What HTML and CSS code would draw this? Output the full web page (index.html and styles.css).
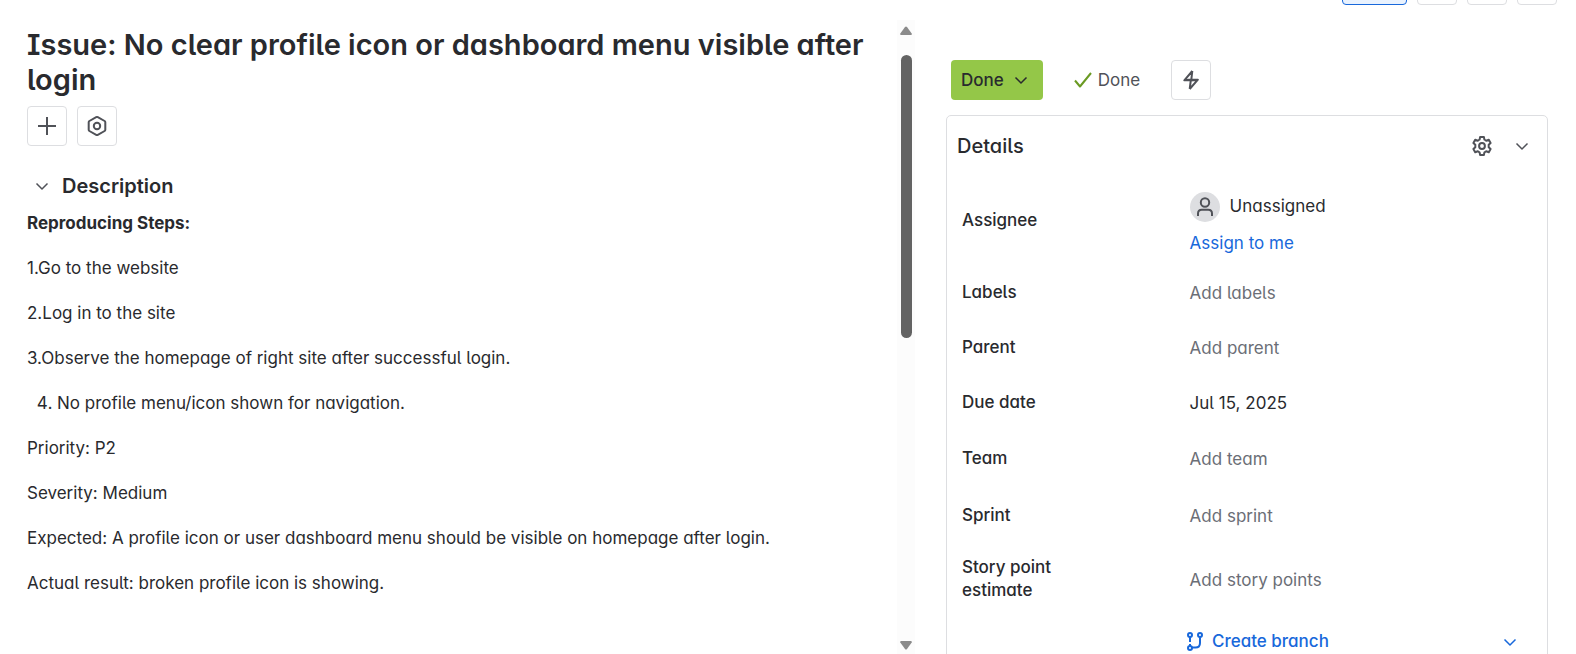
FILE: index.html
```html
<!DOCTYPE html>
<html lang="en">
<head>
<meta charset="utf-8">
<title>Issue: No clear profile icon or dashboard menu visible after login</title>
<link rel="stylesheet" href="styles.css">
</head>
<body>
<div class="issue">
  <main class="content">
    <h1 class="title">Issue: No clear profile icon or dashboard menu visible after login</h1>
    <div class="actions">
      <button class="icon-button" type="button" aria-label="Add">
        <svg width="20" height="20" viewBox="0 0 20 20"><path d="M10 1v18M1 10h18"/></svg>
      </button>
      <button class="icon-button" type="button" aria-label="Apps">
        <svg width="20" height="20" viewBox="0 0 20 20"><path d="M9.2 1.2Q10 .8 10.800 1.200L17.600 5Q18.300 5.400 18.300 6.200V13.800Q18.300 14.600 17.600 15L10.800 18.800Q10 19.200 9.200 18.800L2.400 15Q1.700 14.600 1.700 13.800V6.200Q1.700 5.400 2.400 5Z"/><circle cx="10" cy="10" r="3.200"/></svg>
      </button>
    </div>
    <section>
      <div class="section-head">
        <button class="bare-button" type="button" aria-label="Collapse description">
          <svg width="14" height="14" viewBox="0 0 14 14"><path class="thin" d="M1.500 4.500L7 10l5.500-5.500"/></svg>
        </button>
        <h2 class="section-title">Description</h2>
      </div>
      <div class="description">
        <p><strong>Reproducing Steps:</strong></p>
        <p>1.Go to the website</p>
        <p>2.Log in to the site</p>
        <p>3.Observe the homepage of right site after successful login.</p>
        <ol start="4"><li>No profile menu/icon shown for navigation.</li></ol>
        <p>Priority: P2</p>
        <p>Severity: Medium</p>
        <p>Expected: A profile icon or user dashboard menu should be visible on homepage after login.</p>
        <p>Actual result: broken profile icon is showing.</p>
      </div>
    </section>
  </main>

  <div class="scrollbar" aria-hidden="true">
    <svg class="arrow" width="14" height="10" viewBox="0 0 14 10"><path d="M6 1Q7 0 8 1l4.700 6.500Q13.200 9 12 9H2Q.8 9 1.300 7.500Z"/></svg>
    <div class="track"><div class="thumb"></div></div>
    <svg class="arrow" width="14" height="10" viewBox="0 0 14 10"><path d="M6 9Q7 10 8 9l4.700-6.500Q13.200 1 12 1H2Q.8 1 1.300 2.500Z"/></svg>
  </div>

  <aside class="sidebar">
    <div class="toolbar">
      <button class="icon-button watch" type="button" aria-label="Watch"></button>
      <button class="icon-button" type="button" aria-label="Share"></button>
      <button class="icon-button" type="button" aria-label="More actions"></button>
      <button class="icon-button" type="button" aria-label="Full screen"></button>
    </div>
    <div class="status">
      <button class="status-button" type="button">Done
        <svg width="14" height="14" viewBox="0 0 14 14"><path class="thin" d="M1.500 4.500L7 10l5.500-5.500"/></svg>
      </button>
      <span class="resolution">
        <svg width="18" height="18" viewBox="0 0 18 18"><path d="M1 9.500L6 15.500 17 2"/></svg>
        Done
      </span>
      <button class="icon-button" type="button" aria-label="Automation">
        <svg width="20" height="20" viewBox="0 0 20 20"><path d="M11.300 1L3.300 10.300L10.300 9.500M8.700 19L16.900 9.700L9.900 10.500M11.300 1L10.300 9.700H16.900M8.700 19L9.800 10.300H3.300"/></svg>
      </button>
    </div>
    <section class="details">
      <header class="details-head">
        <h2 class="details-title">Details</h2>
        <button class="bare-button" type="button" aria-label="Configure fields">
          <svg width="20" height="20" viewBox="0 0 20 20"><path d="M8.100 1H11.900L12.400 3.600Q13.200 3.900 14.200 4.700L16.800 3.800 18.600 7 16.700 8.800V11.200L18.600 13 16.800 16.200 14.200 15.300Q13.200 16.100 12.400 16.400L11.900 19H8.100L7.600 16.400Q6.800 16.100 5.800 15.300L3.200 16.200 1.400 13 3.300 11.200V8.800L1.400 7 3.200 3.800 5.800 4.700Q6.800 3.900 7.600 3.600Z"/><circle cx="10" cy="10" r="2.900"/></svg>
        </button>
        <button class="bare-button" type="button" aria-label="Collapse details">
          <svg width="14" height="14" viewBox="0 0 14 14"><path class="thin" d="M1.500 4.500L7 10l5.500-5.500"/></svg>
        </button>
      </header>
      <dl class="fields">
        <div class="field assignee">
          <dt>Assignee</dt>
          <dd>
            <span class="person">
              <span class="avatar"><svg width="20" height="20" viewBox="0 0 20 20"><circle cx="10" cy="5.500" r="4.200"/><path d="M3 19V16.500Q3 12.700 6.800 12.700H13.200Q17 12.700 17 16.500V19"/></svg></span>
              Unassigned
            </span>
            <a class="link" href="#">Assign to me</a>
          </dd>
        </div>
        <div class="field"><dt>Labels</dt><dd class="empty">Add labels</dd></div>
        <div class="field"><dt>Parent</dt><dd class="empty">Add parent</dd></div>
        <div class="field"><dt>Due date</dt><dd>Jul 15, 2025</dd></div>
        <div class="field roomy"><dt>Team</dt><dd class="empty">Add team</dd></div>
        <div class="field roomy"><dt>Sprint</dt><dd class="empty">Add sprint</dd></div>
        <div class="field two-line"><dt>Story point estimate</dt><dd class="empty">Add story points</dd></div>
      </dl>
      <div class="development">
        <a class="link branch" href="#">
          <svg width="16" height="20" viewBox="0 0 16 20"><circle cx="3" cy="3" r="2"/><circle cx="13" cy="3" r="2"/><circle cx="3" cy="16" r="2"/><path d="M3 5v5M3 12v2M13 5v6Q13 15.500 8.500 15.500H5"/></svg>
          Create branch
        </a>
        <button class="bare-button blue" type="button" aria-label="Branch options">
          <svg width="14" height="14" viewBox="0 0 14 14"><path class="thin" d="M1.500 4.500L7 10l5.500-5.500"/></svg>
        </button>
      </div>
    </section>
  </aside>
</div>
</body>
</html>
```
FILE: styles.css
```css
* { box-sizing: border-box; }

body {
  margin: 0;
  background: #fff;
  color: #292a2e;
  font-family: Inter, "Liberation Sans", sans-serif;
  font-feature-settings: "cv05", "cv08", "cv11";
  font-size: 17px;
  line-height: 23px;
}

h1, h2, p, ol, dl, dd { margin: 0; }
button { font: inherit; font-feature-settings: inherit; color: inherit; cursor: pointer; }
svg { display: block; flex: none; fill: none; stroke: currentColor; stroke-width: 2; stroke-linejoin: round; }
svg .thin { stroke-width: 1.5; }

.issue {
  display: grid;
  grid-template-columns: 897fr 18px 661fr;
  height: 100vh;
  overflow: hidden;
}

.content { padding: 27px 27px 0; overflow: hidden; }
.title { font-size: 29px; line-height: 35px; font-weight: 600; }
.actions { display: flex; gap: 10px; margin-top: 9px; }

.icon-button {
  display: flex;
  align-items: center;
  justify-content: center;
  width: 40px;
  height: 40px;
  padding: 0;
  border: 1px solid #dddee1;
  border-radius: 4px;
  background: #fff;
  color: #505258;
}

.bare-button {
  display: flex;
  align-items: center;
  justify-content: center;
  width: 30px;
  height: 30px;
  padding: 0;
  border: 0;
  background: none;
  color: #505258;
}

.section-head { display: flex; align-items: center; gap: 5px; margin-top: 25px; }
.section-title { font-size: 20px; line-height: 25px; font-weight: 600; }
.description { display: grid; gap: 15px; margin-top: 7px; line-height: 30px; }
.description strong { font-weight: 700; }
.description ol { padding-left: 30px; }

.scrollbar {
  display: flex;
  flex-direction: column;
  align-items: center;
  gap: 19px;
  margin-top: 20px;
  padding: 6px 0 4px;
  background: #fcfcfc;
}
.arrow { fill: #8b8b8b; stroke: none; }
.track { flex: 1; width: 11px; }
.thumb { height: 50%; border-radius: 6px; background: #636363; }

.sidebar { display: flex; flex-direction: column; padding: 0 28px 0 31px; overflow: hidden; }
.toolbar {
  display: flex;
  flex: none;
  align-items: flex-end;
  justify-content: flex-end;
  gap: 10px;
  height: 5px;
  margin-right: -9px;
}
.watch { width: 65px; border-color: #1868db; background: #e9f2fe; }

.status { display: flex; flex: none; align-items: center; margin-top: 55px; padding-left: 5px; }
.status-button {
  display: flex;
  align-items: center;
  gap: 10px;
  height: 40px;
  padding: 0 15px 0 10px;
  border: 0;
  border-radius: 4px;
  background: #94c748;
  font-weight: 500;
}
.resolution { display: flex; align-items: center; gap: 6px; margin: 0 31px; color: #505258; }
.resolution svg { color: #6a9a23; }

.details {
  flex: 1;
  min-height: 540px;
  margin-top: 15px;
  border: 1px solid #dddee1;
  border-radius: 5px 5px 0 0;
}
.details-head { display: flex; align-items: center; gap: 10px; height: 60px; padding: 0 10px; }
.details-title { flex: 1; font-size: 20px; line-height: 25px; font-weight: 500; }

.field {
  display: grid;
  grid-template-columns: 228fr 343fr;
  align-items: center;
  min-height: 55px;
  padding: 0 15px;
}
.field dt { max-width: 130px; font-weight: 500; }
.field dd { padding-top: 2px; }
.assignee { min-height: 89px; }
.roomy { min-height: 57px; }
.two-line { min-height: 70px; }
.empty { color: #6b6e76; }
.person { display: flex; align-items: center; gap: 10px; margin: 3px 0 10px; }
.avatar {
  display: flex;
  align-items: center;
  justify-content: center;
  width: 30px;
  height: 30px;
  border-radius: 50%;
  background: #dddee1;
  color: #505258;
}
.link { color: #1868db; text-decoration: none; }

.development {
  display: flex;
  align-items: center;
  justify-content: space-between;
  min-height: 55px;
  margin-left: 40%;
  padding-right: 22px;
}
.branch { display: flex; align-items: center; gap: 9px; font-weight: 500; }
.blue { color: #1868db; }
```
